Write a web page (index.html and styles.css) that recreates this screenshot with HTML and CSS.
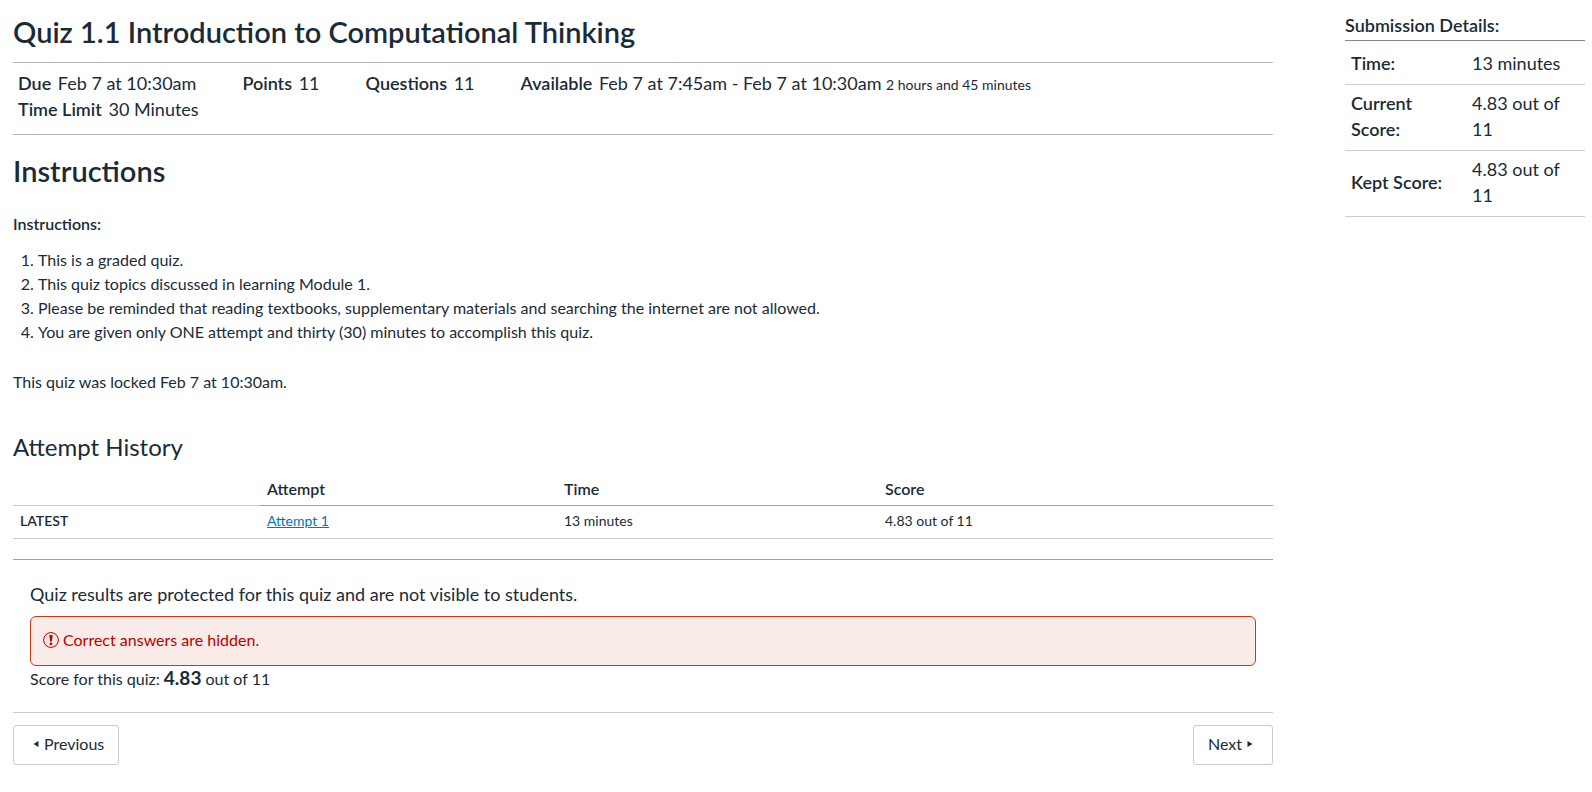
FILE: index.html
```html
<!DOCTYPE html>
<html lang="en">
<head>
<meta charset="utf-8">
<title>Quiz 1.1 Introduction to Computational Thinking</title>
<link rel="stylesheet" href="styles.css">
</head>
<body>
<div class="page">
  <main class="content">
    <h1 class="title">Quiz 1.1 Introduction to Computational Thinking</h1>
    <ul class="facts">
      <li class="fact"><span class="fact-label">Due</span> <span>Feb 7 at 10:30am</span></li>
      <li class="fact"><span class="fact-label">Points</span> <span>11</span></li>
      <li class="fact"><span class="fact-label">Questions</span> <span>11</span></li>
      <li class="fact fact-wide"><span class="fact-label">Available</span> <span>Feb 7 at 7:45am - Feb 7 at 10:30am <small class="duration">2 hours and 45 minutes</small></span></li>
      <li class="fact"><span class="fact-label">Time Limit</span> <span>30 Minutes</span></li>
    </ul>
    <section class="instructions">
      <h2 class="heading">Instructions</h2>
      <p class="lead">Instructions:</p>
      <ol class="rules">
        <li>This is a graded quiz.</li>
        <li>This quiz topics discussed in learning Module 1.</li>
        <li>Please be reminded that reading textbooks, supplementary materials and searching the internet are not allowed.</li>
        <li>You are given only ONE attempt and thirty (30) minutes to accomplish this quiz.</li>
      </ol>
      <p class="locked">This quiz was locked Feb 7 at 10:30am.</p>
    </section>
    <section class="history">
      <h2 class="subheading">Attempt History</h2>
      <table class="attempts">
        <thead>
          <tr><td class="col-flag"></td><th class="col-attempt" scope="col">Attempt</th><th class="col-time" scope="col">Time</th><th scope="col">Score</th></tr>
        </thead>
        <tbody>
          <tr><th class="flag" scope="row">LATEST</th><td><a class="link" href="#attempt-1">Attempt 1</a></td><td>13 minutes</td><td>4.83 out of 11</td></tr>
        </tbody>
      </table>
    </section>
    <section class="results">
      <p class="protected">Quiz results are protected for this quiz and are not visible to students.</p>
      <div class="alert" role="alert">
        <svg class="alert-icon" viewBox="0 0 16 16" aria-hidden="true"><circle cx="8" cy="8" r="7.4" fill="none" stroke="currentColor" stroke-width="1"/><path d="M6.300 3h3.400L8.900 9.500H7.100z" fill="currentColor"/><circle cx="8" cy="11.800" r="1.400" fill="currentColor"/></svg>
        <span>Correct answers are hidden.</span>
      </div>
      <p class="score">Score for this quiz: <strong class="score-value">4.83</strong> out of 11</p>
    </section>
    <nav class="pager">
      <a class="button button-previous" href="#previous"><svg class="arrow" viewBox="0 0 6 8" aria-hidden="true"><path d="M5.500 1v6L.5 4z" fill="currentColor"/></svg>Previous</a>
      <a class="button button-next" href="#next">Next<svg class="arrow" viewBox="0 0 6 8" aria-hidden="true"><path d="M.5 1v6l5-3z" fill="currentColor"/></svg></a>
    </nav>
  </main>
  <aside class="sidebar">
    <h2 class="sidebar-title">Submission Details:</h2>
    <table class="details">
      <tbody>
        <tr><th scope="row">Time:</th><td>13 minutes</td></tr>
        <tr><th scope="row">Current Score:</th><td>4.83 out of 11</td></tr>
        <tr><th scope="row">Kept Score:</th><td>4.83 out of 11</td></tr>
      </tbody>
    </table>
  </aside>
</div>
</body>
</html>
```

FILE: styles.css
```css
* { box-sizing: border-box; }
body {
  margin: 0;
  background: #fff;
  color: #1a2b36;
  font: 400 16px/24px Lato, "Liberation Sans", sans-serif;
}
h1, h2, p, ul, ol { margin: 0; padding: 0; }
h1, h2, th { font-weight: 600; }
th { text-align: left; }
.page { display: flex; gap: 72px; padding: 11px 7px 24px 13px; }
.content { flex: 1; min-width: 0; }
.title { font-size: 29px; line-height: 42px; padding-bottom: 9px; border-bottom: 1px solid #b4b8ba; }
.facts {
  display: flex;
  flex-wrap: wrap;
  column-gap: 46px;
  padding: 7px 5px 12px;
  border-bottom: 1px solid #b4b8ba;
  list-style: none;
  font-size: 18px;
  line-height: 26px;
}
.fact-label { margin-right: 2px; font-weight: 600; }
.fact-wide { flex: 1 1 50%; }
.duration { font-size: 14px; line-height: 16px; }
.heading { margin-top: 15px; font-size: 29px; line-height: 42px; }
.lead { margin-top: 20px; font-weight: 600; }
.rules { margin: 12px 0 0 25px; }
.locked { margin-top: 26px; }
.subheading { margin-top: 35px; font-size: 24px; line-height: 36px; font-weight: 400; }
.attempts { width: 100%; margin-top: 8px; border-collapse: collapse; table-layout: fixed; font-size: 14px; }
.attempts td, .attempts th { padding: 4px 7px; border-bottom: 1px solid #c7cdd1; }
.attempts thead th { border-bottom-color: #9ea6ad; font-size: 16px; }
.attempts tbody th, .attempts tbody td { padding-top: 3px; padding-bottom: 5px; }
.col-flag { width: 247px; }
.col-attempt { width: 297px; }
.col-time { width: 321px; }
.link { color: #0374b5; }
.results { margin-top: 20px; padding: 21px 17px; border-top: 1px solid #a0a4a7; border-bottom: 1px solid #c7cdd1; }
.protected { font-size: 18px; line-height: 26px; }
.alert {
  display: flex;
  align-items: center;
  gap: 4px;
  margin-top: 9px;
  padding: 11px 12px 13px;
  border: 1px solid #c23c10;
  border-radius: 6px;
  background: #f9ebe7;
  color: #b80000;
}
.alert-icon { width: 16px; height: 16px; }
.score-value { font-size: 19px; }
.pager { display: flex; justify-content: space-between; padding-top: 12px; }
.button {
  display: flex;
  align-items: center;
  gap: 5px;
  padding: 6px 14px 8px;
  border: 1px solid #c7cdd1;
  border-radius: 3px;
  color: inherit;
  text-decoration: none;
}
.button-previous { padding-left: 19px; }
.button-next { padding-right: 19px; }
.arrow { width: 6px; height: 8px; }
.sidebar { width: 240px; flex: none; }
.sidebar-title { padding-bottom: 1px; border-bottom: 1px solid #7f888f; font-size: 18px; line-height: 28px; }
.details { width: 100%; margin-top: 4px; border-collapse: collapse; font-size: 18px; line-height: 26px; }
.details th, .details td { padding: 5px 6px 8px; border-bottom: 1px solid #c7cdd1; }
.details th { width: 121px; }
```
